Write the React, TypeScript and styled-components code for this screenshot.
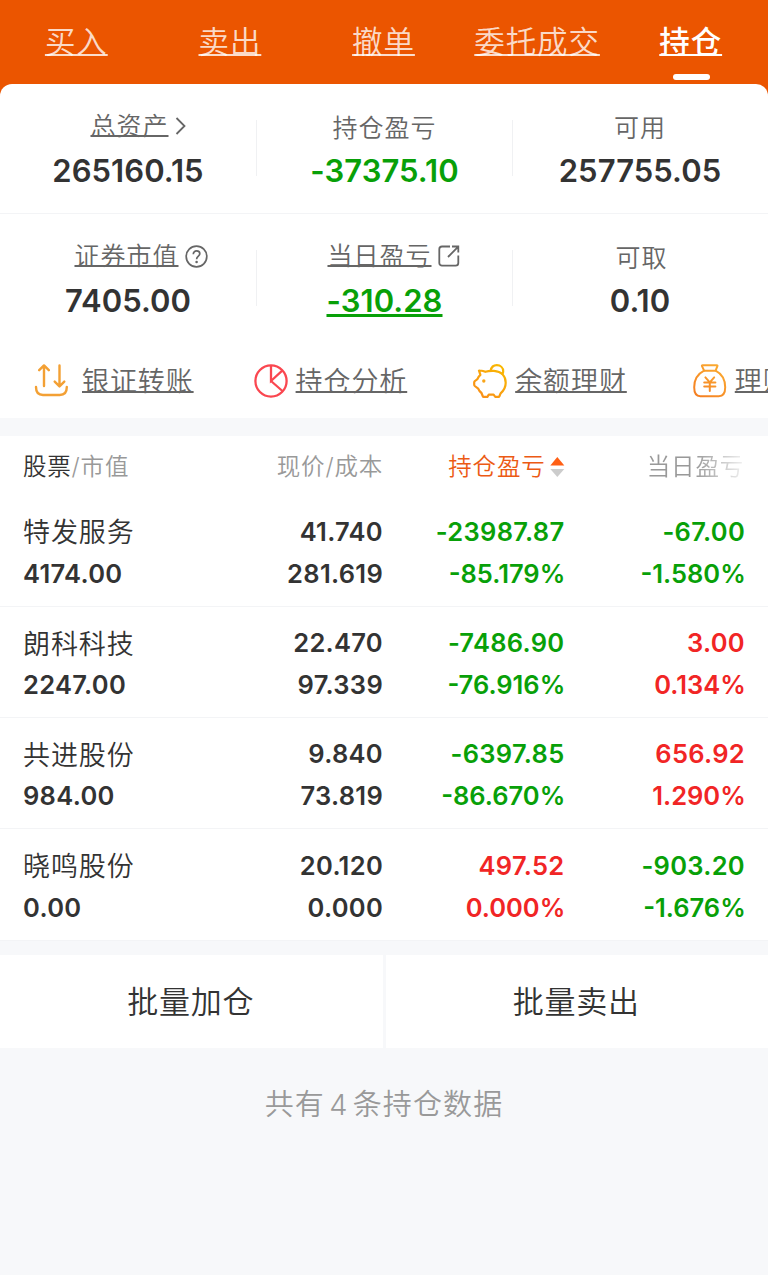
import React from 'react';
import styled, { createGlobalStyle } from 'styled-components';

const GlobalStyle = createGlobalStyle`
  * { box-sizing: border-box; }
  body {
    margin: 0;
    background: #f7f8fa;
    color: #333;
    font-family: Inter, "Noto Sans CJK SC", sans-serif;
    font-weight: 350;
  }
`;

type Tone = 'up' | 'down' | 'plain';
const toneColor: Record<Tone, string> = { up: '#f12525', down: '#08a008', plain: '#333' };

const Page = styled.div`
  width: 768px;
  min-height: 1275px;
  overflow: hidden;
  background: #f7f8fa;
`;

const Header = styled.header`
  background: #eb5500;
`;

const Tabs = styled.nav`
  display: grid;
  grid-template-columns: repeat(5, 1fr);
  height: 84px;
`;

const Tab = styled.a<{ $active?: boolean }>`
  display: flex;
  flex-direction: column;
  align-items: center;
  padding-top: 20px;
  color: ${(p) => (p.$active ? '#fff' : 'rgba(255, 255, 255, 0.8)')};
  font-weight: ${(p) => (p.$active ? 500 : 350)};
`;

const TabText = styled.span`
  margin-right: 1px;
  font-size: 30.5px;
  line-height: 44px;
  letter-spacing: 0.9px;
  white-space: nowrap;
  text-decoration: underline;
  text-decoration-thickness: 2px;
  text-decoration-skip-ink: none;
  text-underline-offset: 1px;
`;

const TabBar = styled.i`
  width: 37px;
  height: 6px;
  margin-top: 10px;
  border-radius: 3px;
  background: #fff;
`;

const Panel = styled.section`
  height: 334px;
  border-radius: 12px 12px 0 0;
  background: #fff;
`;

const StatRow = styled.div<{ $line?: boolean }>`
  display: grid;
  grid-template-columns: 257px 256px 255px;
  height: 130px;
  border-bottom: 1px solid ${(p) => (p.$line ? '#f3f4f6' : 'transparent')};
`;

const Stat = styled.div`
  display: flex;
  flex-direction: column;
  align-items: center;
  padding: 24px 1px 0 0;
  background: linear-gradient(#f0f1f3, #f0f1f3) 100% 36px / 1px 56px no-repeat;
  &:last-child { background: none; }
`;

const StatLabel = styled.div<{ $link?: boolean; $indent?: number }>`
  display: flex;
  align-items: center;
  gap: 6px;
  height: 40px;
  padding-bottom: ${(p) => (p.$link ? 4 : 0)}px;
  padding-left: ${(p) => p.$indent ?? 0}px;
  color: #666;
  font-size: 25px;
  letter-spacing: 1px;
  line-height: 36px;
  span {
    text-decoration: ${(p) => (p.$link ? 'underline' : 'none')};
    text-decoration-thickness: 2px;
    text-decoration-skip-ink: none;
    text-underline-offset: 0px;
  }
`;

const StatValue = styled.div<{ $tone: Tone; $link?: boolean }>`
  color: ${(p) => toneColor[p.$tone]};
  font-size: 31px;
  font-weight: 600;
  line-height: 45px;
  letter-spacing: 0.05px;
  text-decoration: ${(p) => (p.$link ? 'underline' : 'none')};
  text-decoration-thickness: 3px;
  text-decoration-skip-ink: none;
  text-underline-offset: 2px;
`;

const Actions = styled.div`
  display: flex;
  height: 74px;
  padding-left: 34px;
  overflow: hidden;
`;

const Action = styled.a<{ $gap?: number }>`
  display: flex;
  flex: none;
  align-items: center;
  gap: ${(p) => p.$gap ?? 8}px;
  width: 219.6px;
  height: 73px;
  color: #666;
  font-size: 27px;
  letter-spacing: 0.9px;
  white-space: nowrap;
  svg { flex: none; }
  span {
    padding-top: 2px;
    line-height: 40px;
    text-decoration: underline;
    text-decoration-thickness: 2px;
    text-decoration-skip-ink: none;
    text-underline-offset: 0px;
  }
`;

const Holdings = styled.section`
  margin-top: 18px;
  background: #fff;
`;

const columns = '180px 180px 181.5px 180.5px';

const HeadRow = styled.div`
  display: grid;
  grid-template-columns: ${columns};
  height: 59.7px;
  padding: 11px 23px 0;
  color: #999;
  font-size: 23.5px;
  letter-spacing: 0.8px;
  line-height: 40px;
`;

const HeadCell = styled.div<{ $sorted?: boolean; $fade?: boolean }>`
  display: flex;
  justify-content: flex-end;
  align-items: center;
  white-space: nowrap;
  height: 40px;
  color: ${(p) => (p.$sorted ? '#ec5a14' : 'inherit')};
  ${(p) => p.$fade && 'padding-right: 1px; mask-image: linear-gradient(90deg, #000 130px, rgba(0,0,0,.15) 178px);'}
  &:first-child { justify-content: flex-start; }
  b { color: #333; font-weight: inherit; }
  svg { margin-left: 4px; }
`;

const Row = styled.div`
  display: grid;
  grid-template-columns: ${columns};
  height: 111.25px;
  padding: 15.3px 23px 0;
  border-bottom: 1px solid #f3f4f6;
`;

const Cell = styled.div<{ $tone?: Tone }>`
  display: flex;
  flex-direction: column;
  align-items: flex-end;
  color: ${(p) => toneColor[p.$tone ?? 'plain']};
  font-size: 25.5px;
  font-weight: 600;
  line-height: 42px;
  letter-spacing: 0.3px;
  &:first-child { align-items: flex-start; }
`;

const Percent = styled.span`
  margin-right: -0.8px;
  letter-spacing: 0;
`;

const StockName = styled.span`
  height: 42px;
  padding-top: 1.5px;
  font-size: 27px;
  font-weight: 350;
  letter-spacing: 0.9px;
`;

const BatchBar = styled.div`
  display: grid;
  grid-template-columns: 1fr 1fr;
  gap: 3px;
  margin-top: 14.3px;
`;

const BatchButton = styled.button`
  height: 93px;
  padding: 2px 1px 0 0;
  border: 0;
  background: #fff;
  color: #333;
  font: 350 31px/44px Inter, "Noto Sans CJK SC", sans-serif;
  letter-spacing: 0.8px;
`;

const Footer = styled.p`
  margin: 35px 0 0;
  color: #999;
  font-size: 29px;
  letter-spacing: 1.1px;
  line-height: 44px;
  text-align: center;
  word-spacing: -5px;
`;

const Chevron = () => (
  <svg width="11" height="18" viewBox="0 0 11 18" fill="none" stroke="#666" strokeWidth="1.8">
    <path d="M1.5 1L9.5 9L1.5 17" />
  </svg>
);

const Help = () => (
  <svg width="23" height="23" viewBox="0 0 23 23" fill="none" stroke="#666" strokeWidth="1.7">
    <circle cx="11.5" cy="11.5" r="10.3" />
    <path d="M8.3 9.2C8.3 7.1 9.7 5.9 11.6 5.9S14.8 7.1 14.8 8.8C14.8 11.1 11.6 11.2 11.6 14.2" />
    <circle cx="11.6" cy="17" r="1.3" fill="#666" stroke="none" />
  </svg>
);

const External = () => (
  <svg width="22" height="22" viewBox="0 0 22 22" fill="none" stroke="#666" strokeWidth="1.8">
    <path d="M12 1.5H4A2.7 2.7 0 0 0 1.3 4.2V18A2.7 2.7 0 0 0 4 20.7H17.6A2.7 2.7 0 0 0 20.3 18V10.5" />
    <path d="M14 1.5H20.3V7.5M20 1.8L10 12" />
  </svg>
);

const SortArrows = () => (
  <svg width="15" height="20" viewBox="0 0 15 20">
    <path d="M7.3 0L14.3 8.5H.3Z" fill="#ff5f14" />
    <path d="M7.3 20L14.3 12H.3Z" fill="#ccc" />
  </svg>
);

const TransferIcon = () => (
  <svg width="34" height="34" viewBox="0 0 34 34" fill="none" stroke="#f3a034" strokeWidth="2.4" strokeLinecap="round" strokeLinejoin="round">
    <path d="M10 22V2M5.2 6.2L10 1.4L14.8 6.2" />
    <path d="M25.5 1.5V22M20.7 17.6L25.5 22.4L30.3 17.6" />
    <path d="M2 23C2 28.5 4 31 9 31H25.8C30.8 31 32.8 28.5 32.8 23" />
  </svg>
);

const PieIcon = () => (
  <svg width="34" height="34" viewBox="0 0 34 34" fill="none" stroke="#fa4750" strokeWidth="2.3">
    <circle cx="17" cy="17" r="15.6" />
    <path d="M17 1.3V17L28.5 6.4M17 17L29 27.5" />
  </svg>
);

const PiggyIcon = () => (
  <svg width="34" height="34" viewBox="0 0 34 34" fill="none" stroke="url(#piggy)" strokeWidth="2.2" strokeLinecap="round" strokeLinejoin="round">
    <defs>
      <linearGradient id="piggy" x1="0" y1="34" x2="26" y2="0" gradientUnits="userSpaceOnUse">
        <stop stopColor="#f98a1d" />
        <stop offset="1" stopColor="#f9b800" />
      </linearGradient>
    </defs>
    <path d="M6.2 7.2C5.6 6.8 6.2 6.4 7 6.5Q10.3 6.8 12.4 7.8Q16 6.6 21 6.9C28.4 7.4 32.7 12 32.7 18.8C32.7 23.3 30.8 26.6 27.6 29.4L26.5 32Q26.2 32.8 25.4 32.8H22.3L20.6 30.6H15.8L14.4 32.8H10.7Q10 32.8 9.7 32L8.5 29Q6.3 27.4 5.2 24.6L1.8 22Q1.2 21.5 1.2 20.8V18.2Q1.2 17.4 2 17L4.4 15.1Q5.4 12.4 7.4 10.8Q6.8 9 6.2 7.2Z" />
    <path d="M17.6 6.8C18.3 3.3 20.6 1.2 23.8 1.2C27.6 1.2 30.2 3.9 30.2 7.2Q30.2 9 29.3 10.2" />
    <circle cx="10.8" cy="17" r="1.7" fill="#f9a51a" stroke="none" />
  </svg>
);

const MoneyBagIcon = () => (
  <svg width="34" height="34" viewBox="0 0 34 34" fill="none" stroke="url(#bag)" strokeWidth="2" strokeLinecap="round" strokeLinejoin="round">
    <defs>
      <linearGradient id="bag" x1="0" y1="34" x2="24" y2="0" gradientUnits="userSpaceOnUse">
        <stop stopColor="#f47a20" />
        <stop offset="1" stopColor="#fbab31" />
      </linearGradient>
    </defs>
    <path d="M9.6 1.2H23.8Q24.8 1.2 24.4 2.2L22.6 6.7H11.1L9 2.2Q8.6 1.2 9.6 1.2Z" />
    <path d="M11.1 6.7C5 9.8 1.2 15.5 1.2 23.3C1.2 29.6 3.2 32.2 7.3 32.2H25.8C30 32.2 32.2 29.6 32.2 23.3C32.2 15.5 28.5 9.8 22.6 6.7" />
    <path d="M12.4 13.4L16.8 18.4L21.2 13.4M11.2 18.6H22.4M11.2 22.4H22.4M16.8 18.6V27" />
  </svg>
);

interface Holding {
  name: string;
  value: string;
  price: string;
  cost: string;
  total: [string, string, Tone];
  day: [string, string, Tone];
}

const holdings: Holding[] = [
  { name: '特发服务', value: '4174.00', price: '41.740', cost: '281.619', total: ['-23987.87', '-85.179%', 'down'], day: ['-67.00', '-1.580%', 'down'] },
  { name: '朗科科技', value: '2247.00', price: '22.470', cost: '97.339', total: ['-7486.90', '-76.916%', 'down'], day: ['3.00', '0.134%', 'up'] },
  { name: '共进股份', value: '984.00', price: '9.840', cost: '73.819', total: ['-6397.85', '-86.670%', 'down'], day: ['656.92', '1.290%', 'up'] },
  { name: '晓鸣股份', value: '0.00', price: '20.120', cost: '0.000', total: ['497.52', '0.000%', 'up'], day: ['-903.20', '-1.676%', 'down'] },
];

interface StatData {
  label: string;
  value: string;
  tone?: Tone;
  icon?: React.ReactNode;
  indent?: number;
  valueLink?: boolean;
}

const stats: StatData[][] = [
  [
    { label: '总资产', value: '265160.15', icon: <Chevron />, indent: 20 },
    { label: '持仓盈亏', value: '-37375.10', tone: 'down' },
    { label: '可用', value: '257755.05' },
  ],
  [
    { label: '证券市值', value: '7405.00', icon: <Help />, indent: 26 },
    { label: '当日盈亏', value: '-310.28', tone: 'down', icon: <External />, indent: 18, valueLink: true },
    { label: '可取', value: '0.10', indent: 3 },
  ],
];

const tabs = ['买入', '卖出', '撤单', '委托成交', '持仓'];

export default function App() {
  return (
    <Page>
      <GlobalStyle />
      <Header>
        <Tabs>
          {tabs.map((t) => (
            <Tab key={t} $active={t === '持仓'}>
              <TabText>{t}</TabText>
              {t === '持仓' && <TabBar />}
            </Tab>
          ))}
        </Tabs>
        <Panel>
          {stats.map((row, i) => (
            <StatRow key={i} $line={i === 0}>
              {row.map((s) => (
                <Stat key={s.label}>
                  <StatLabel $link={!!s.icon} $indent={s.indent}>
                    <span>{s.label}</span>
                    {s.icon}
                  </StatLabel>
                  <StatValue $tone={s.tone ?? 'plain'} $link={s.valueLink}>{s.value}</StatValue>
                </Stat>
              ))}
            </StatRow>
          ))}
          <Actions>
            <Action $gap={14}><TransferIcon /><span>银证转账</span></Action>
            <Action><PieIcon /><span>持仓分析</span></Action>
            <Action><PiggyIcon /><span>余额理财</span></Action>
            <Action><MoneyBagIcon /><span>理财</span></Action>
          </Actions>
        </Panel>
      </Header>
      <Holdings>
        <HeadRow>
          <HeadCell><b>股票</b>/市值</HeadCell>
          <HeadCell>现价/成本</HeadCell>
          <HeadCell $sorted>持仓盈亏<SortArrows /></HeadCell>
          <HeadCell $fade>当日盈亏</HeadCell>
        </HeadRow>
        {holdings.map((h) => (
          <Row key={h.name}>
            <Cell><StockName>{h.name}</StockName><span>{h.value}</span></Cell>
            <Cell><span>{h.price}</span><span>{h.cost}</span></Cell>
            <Cell $tone={h.total[2]}><span>{h.total[0]}</span><Percent>{h.total[1]}</Percent></Cell>
            <Cell $tone={h.day[2]}><span>{h.day[0]}</span><Percent>{h.day[1]}</Percent></Cell>
          </Row>
        ))}
      </Holdings>
      <BatchBar>
        <BatchButton>批量加仓</BatchButton>
        <BatchButton>批量卖出</BatchButton>
      </BatchBar>
      <Footer>共有 4 条持仓数据</Footer>
    </Page>
  );
}
